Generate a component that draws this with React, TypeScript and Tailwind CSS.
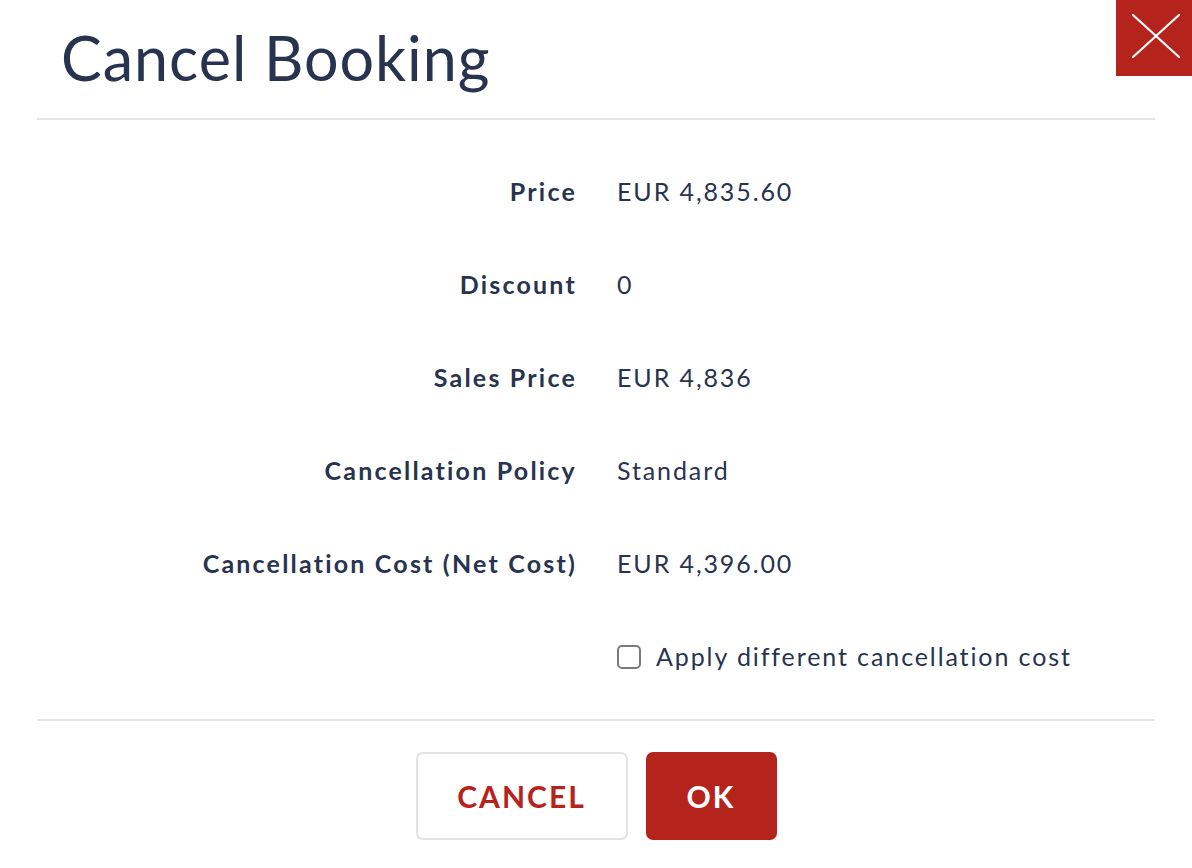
const rows = [
  { label: "Price", value: "EUR 4,835.60" },
  { label: "Discount", value: "0" },
  { label: "Sales Price", value: "EUR 4,836" },
  { label: "Cancellation Policy", value: "Standard" },
  { label: "Cancellation Cost (Net Cost)", value: "EUR 4,396.00" },
];

export default function App() {
  return (
    <div className="relative w-[1192px] h-[868px] bg-white text-[#283350] font-['Lato',sans-serif]">
      <button
        type="button"
        className="absolute top-0 right-0 w-[76px] h-[76px] bg-[#b5241c]"
      >
        <svg width="76" height="76" viewBox="0 0 76 76" className="block">
          <path d="M17 15 L63 57 M63 15 L17 57" stroke="white" strokeWidth="2.2" strokeLinecap="round" />
        </svg>
      </button>

      <div className="h-[120px] mx-[37px] border-b-2 border-[#e5e5e5] flex items-center pl-[24px] pb-1">
        <h1 className="text-[61px] leading-none tracking-[1px]">Cancel Booking</h1>
      </div>

      <div className="mx-[37px] pt-[25px] pb-[16px] border-b-2 border-[#e5e5e5]">
        <div className="grid grid-cols-[539px_1fr] gap-x-[41px] tracking-[1.9px]">
          {rows.map((r) => (
            <div key={r.label} className="contents">
              <div className="h-[93px] flex items-center justify-end text-[25px] font-bold tracking-[2.2px] -mr-[1px]">
                {r.label}
              </div>
              <div className="h-[93px] flex items-center text-[25px]">{r.value}</div>
            </div>
          ))}
          <div className="h-[93px]" />
          <label className="h-[93px] flex items-center gap-[15px] text-[25px]">
            <span className="w-[24px] h-[24px] rounded-[5px] border-2 border-[#7a7a7a] bg-white" />
            Apply different cancellation cost
          </label>
        </div>
      </div>

      <div className="flex justify-center gap-[18px] pt-[31px] tracking-[2px]">
        <button
          type="button"
          className="w-[212px] h-[88px] rounded-[7px] border-2 border-[#e3e3e3] bg-white text-[#b5241c] text-[30px] font-bold"
        >
          CANCEL
        </button>
        <button
          type="button"
          className="w-[131px] h-[88px] rounded-[7px] bg-[#b5241c] text-white text-[30px] font-bold"
        >
          OK
        </button>
      </div>
    </div>
  );
}
